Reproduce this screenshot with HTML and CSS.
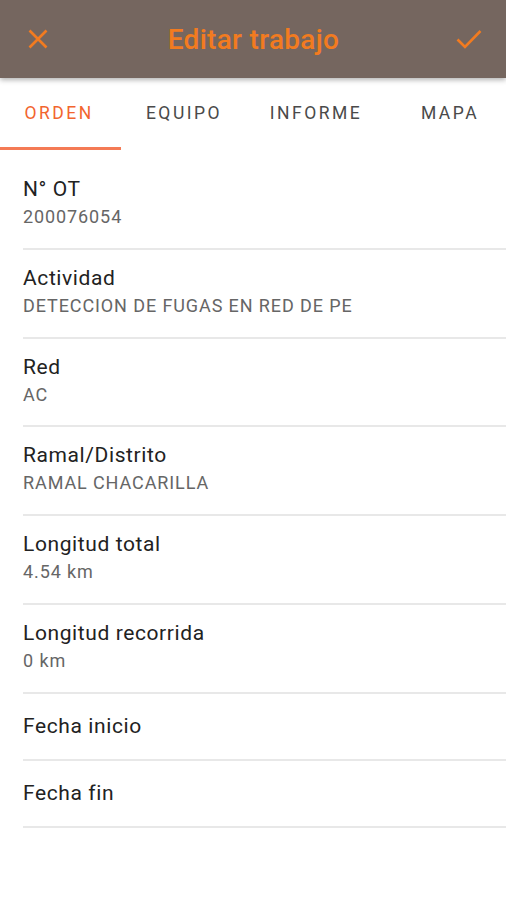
FILE: index.html
```html
<!DOCTYPE html>
<html lang="es">
<head>
    <meta charset="UTF-8">
    <meta name="viewport" content="width=device-width, initial-scale=1.0">
    <title>Editar trabajo</title>
    <link rel="stylesheet" href="styles.css">
</head>
<body>
    <header class="toolbar">
        <button class="tool-btn" aria-label="Cancelar">
            <svg width="20" height="20" viewBox="0 0 20 20">
                <path d="M1.5 1.5 L18.5 18.5 M18.5 1.5 L1.5 18.5" stroke="#f27b20" stroke-width="2.6" fill="none"/>
            </svg>
        </button>
        <h1 class="title">Editar trabajo</h1>
        <button class="tool-btn" aria-label="Guardar">
            <svg width="26" height="20" viewBox="0 0 26 20">
                <path d="M1.5 10.5 L9 18 L24.5 2" stroke="#f27b20" stroke-width="2.6" fill="none"/>
            </svg>
        </button>
    </header>

    <nav class="tabs">
        <div class="tab tab-orden active">ORDEN</div>
        <div class="tab tab-equipo">EQUIPO</div>
        <div class="tab tab-informe">INFORME</div>
        <div class="tab tab-mapa">MAPA</div>
    </nav>

    <div class="list">
        <div class="item">
            <div class="label">N° OT</div>
            <div class="value">200076054</div>
        </div>
        <div class="item">
            <div class="label">Actividad</div>
            <div class="value">DETECCION DE FUGAS EN RED DE PE</div>
        </div>
        <div class="item">
            <div class="label">Red</div>
            <div class="value">AC</div>
        </div>
        <div class="item">
            <div class="label">Ramal/Distrito</div>
            <div class="value">RAMAL CHACARILLA</div>
        </div>
        <div class="item">
            <div class="label">Longitud total</div>
            <div class="value">4.54 km</div>
        </div>
        <div class="item">
            <div class="label">Longitud recorrida</div>
            <div class="value">0 km</div>
        </div>
        <div class="item single">
            <div class="label">Fecha inicio</div>
        </div>
        <div class="item single">
            <div class="label">Fecha fin</div>
        </div>
    </div>
</body>
</html>
```

FILE: styles.css
```css
body {
    margin: 0;
    font-family: Roboto, 'Liberation Sans', sans-serif;
    background-color: #fff;
}
.toolbar {
    height: 78px;
    background-color: #75665f;
    display: flex;
    align-items: center;
    padding: 0 15px 0 16px;
    box-shadow: 0 2px 5px rgba(0, 0, 0, 0.3);
    position: relative;
    z-index: 1;
}
.tool-btn {
    flex: 0 0 44px;
    background: none;
    border: none;
    padding: 0;
    height: 44px;
    display: flex;
    align-items: center;
    justify-content: center;
}
.title {
    flex: 1;
    margin: 0;
    text-align: center;
    color: #f27b20;
    font-size: 28px;
    font-weight: 500;
    letter-spacing: 0.3px;
}
.tabs {
    height: 72px;
    display: flex;
    white-space: nowrap;
    overflow: hidden;
}
.tab {
    flex: 0 0 auto;
    display: flex;
    align-items: center;
    justify-content: center;
    font-size: 17.5px;
    letter-spacing: 2.5px;
    color: #4a4a4a;
    border-bottom: 3px solid transparent;
    box-sizing: border-box;
}
.tab-orden { width: 118px; }
.tab-equipo { width: 129px; }
.tab-informe { width: 138px; }
.tab-mapa { width: 130px; }
.tab.active {
    width: 121px;
    padding-right: 3px;
    color: #f2652e;
    border-bottom-color: #f47a55;
}
.tab-orden.active + .tab-equipo { width: 126px; }
.list {
    padding-top: 11px;
}
.item {
    margin-left: 23px;
    padding: 15px 0 17.75px;
    border-bottom: 2px solid #e8e8e8;
}
.item.single {
    padding: 0;
    height: 65px;
    display: flex;
    align-items: center;
}
.label {
    font-size: 21px;
    line-height: 26px;
    letter-spacing: 0.6px;
    color: #222;
}
.value {
    margin-top: 2px;
    font-size: 18px;
    line-height: 26px;
    color: #666;
    letter-spacing: 0.9px;
}
```
